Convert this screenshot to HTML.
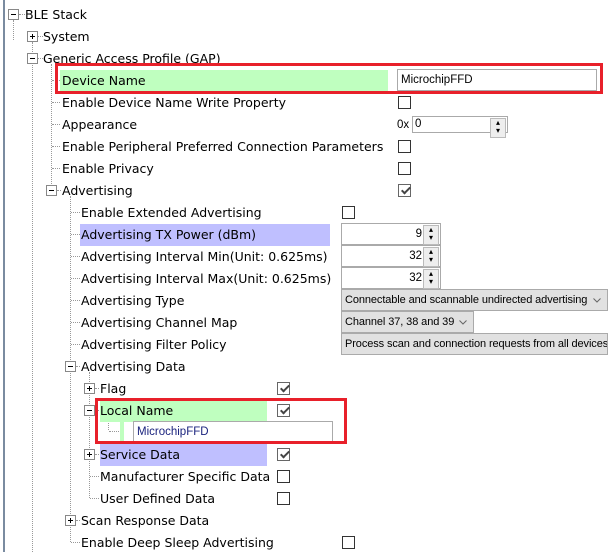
<!DOCTYPE html><html><head><style>
body{margin:0;width:608px;height:552px;background:#fff;position:relative;overflow:hidden;font-family:"DejaVu Sans","Liberation Sans",sans-serif;font-size:12.5px;color:#000}
div{position:absolute;box-sizing:border-box}
.t{height:22px;line-height:22px;white-space:nowrap;margin-top:1px}
.vl{border-left:1px dotted #999;width:1px}
.hl{border-top:1px dotted #999;height:1px}
.ex{width:11px;height:11px;border:1px solid #888;background:#fff}
.ex:before{content:"";position:absolute;left:2px;top:4px;width:5px;height:1px;background:#000}
.ex.p:after{content:"";position:absolute;left:4px;top:2px;width:1px;height:5px;background:#000}
.cb{width:13px;height:13px;border:1px solid #333;background:#fff}
.cb.c{border-color:#666}
.cb.c:after{content:"";position:absolute;width:7px;height:3px;border-left:2px solid #444;border-bottom:2px solid #444;transform:rotate(-45deg);transform-origin:0 0;top:6px;left:2px}
.tb{border:1px solid #aaa;background:#fff;font-size:11.5px;line-height:20px;padding-left:3px;font-family:"Liberation Sans",sans-serif}
.sp{border:1px solid #aaa;background:#fff;font-size:11.5px;line-height:20px;text-align:right;padding-right:18px;font-family:"Liberation Sans",sans-serif}
.sp:after{content:"▴\A▾";white-space:pre;position:absolute;right:1px;top:1px;width:14px;height:18px;background:#eee;border:1px solid #bbb;font-size:8px;line-height:8px;text-align:center}
.cm{border:1px solid #aaa;background:#e1e1e1;font-size:11px;letter-spacing:-0.1px;line-height:20px;padding-left:3px;font-family:"Liberation Sans",sans-serif;white-space:nowrap;overflow:hidden}
.cm svg{position:absolute;right:6px;top:8px}
.red{border:3px solid #e8202a}
</style></head><body>
<div style="left:3px;top:0;width:2px;height:552px;background:#7a8ba0"></div>
<div class="vl" style="left:13px;top:20px;height:20px"></div>
<div class="vl" style="left:32px;top:42px;height:510px"></div>
<div class="vl" style="left:51px;top:64px;height:126px"></div>
<div class="vl" style="left:70px;top:196px;height:346px"></div>
<div class="vl" style="left:89px;top:372px;height:126px"></div>
<div class="vl" style="left:108px;top:416px;height:14px"></div>
<div class="hl" style="left:19px;top:14px;width:6px"></div>
<div class="hl" style="left:38px;top:36px;width:5px"></div>
<div class="hl" style="left:38px;top:58px;width:5px"></div>
<div class="hl" style="left:52px;top:80px;width:8px"></div>
<div class="hl" style="left:52px;top:102px;width:8px"></div>
<div class="hl" style="left:52px;top:124px;width:8px"></div>
<div class="hl" style="left:52px;top:146px;width:8px"></div>
<div class="hl" style="left:52px;top:168px;width:8px"></div>
<div class="hl" style="left:57px;top:190px;width:4px"></div>
<div class="hl" style="left:71px;top:212px;width:9px"></div>
<div class="hl" style="left:71px;top:234px;width:9px"></div>
<div class="hl" style="left:71px;top:256px;width:9px"></div>
<div class="hl" style="left:71px;top:278px;width:9px"></div>
<div class="hl" style="left:71px;top:300px;width:9px"></div>
<div class="hl" style="left:71px;top:322px;width:9px"></div>
<div class="hl" style="left:71px;top:344px;width:9px"></div>
<div class="hl" style="left:76px;top:366px;width:4px"></div>
<div class="hl" style="left:95px;top:388px;width:4px"></div>
<div class="hl" style="left:95px;top:410px;width:4px"></div>
<div class="hl" style="left:109px;top:431px;width:10px"></div>
<div class="hl" style="left:95px;top:454px;width:4px"></div>
<div class="hl" style="left:90px;top:476px;width:9px"></div>
<div class="hl" style="left:90px;top:498px;width:9px"></div>
<div class="hl" style="left:76px;top:520px;width:4px"></div>
<div class="hl" style="left:71px;top:542px;width:9px"></div>
<div class="ex" style="left:8px;top:9px"></div>
<div class="ex p" style="left:27px;top:31px"></div>
<div class="ex" style="left:27px;top:53px"></div>
<div class="ex" style="left:46px;top:185px"></div>
<div class="ex" style="left:65px;top:361px"></div>
<div class="ex p" style="left:84px;top:383px"></div>
<div class="ex" style="left:84px;top:405px"></div>
<div class="ex p" style="left:84px;top:449px"></div>
<div class="ex p" style="left:65px;top:515px"></div>
<div style="left:60px;top:70px;width:328px;height:22px;background:#bfffbf"></div>
<div style="left:80px;top:224px;width:250px;height:22px;background:#bfbfff"></div>
<div style="left:100px;top:400px;width:167px;height:22px;background:#bfffbf"></div>
<div style="left:120px;top:422px;width:4px;height:20px;background:#bfffbf"></div>
<div style="left:100px;top:444px;width:167px;height:22px;background:#bfbfff"></div>
<div class="t" style="left:25px;top:3px">BLE Stack</div>
<div class="t" style="left:43px;top:25px">System</div>
<div class="t" style="left:43px;top:47px">Generic Access Profile (GAP)</div>
<div class="t" style="left:62px;top:69px">Device Name</div>
<div class="t" style="left:62px;top:91px">Enable Device Name Write Property</div>
<div class="t" style="left:62px;top:113px">Appearance</div>
<div class="t" style="left:62px;top:135px">Enable Peripheral Preferred Connection Parameters</div>
<div class="t" style="left:62px;top:157px">Enable Privacy</div>
<div class="t" style="left:62px;top:179px">Advertising</div>
<div class="t" style="left:81px;top:201px">Enable Extended Advertising</div>
<div class="t" style="left:81px;top:223px">Advertising TX Power (dBm)</div>
<div class="t" style="left:81px;top:245px">Advertising Interval Min(Unit: 0.625ms)</div>
<div class="t" style="left:81px;top:267px">Advertising Interval Max(Unit: 0.625ms)</div>
<div class="t" style="left:81px;top:289px">Advertising Type</div>
<div class="t" style="left:81px;top:311px">Advertising Channel Map</div>
<div class="t" style="left:81px;top:333px">Advertising Filter Policy</div>
<div class="t" style="left:81px;top:355px">Advertising Data</div>
<div class="t" style="left:100px;top:377px">Flag</div>
<div class="t" style="left:100px;top:399px">Local Name</div>
<div class="t" style="left:100px;top:443px">Service Data</div>
<div class="t" style="left:100px;top:465px">Manufacturer Specific Data</div>
<div class="t" style="left:100px;top:487px">User Defined Data</div>
<div class="t" style="left:81px;top:509px">Scan Response Data</div>
<div class="t" style="left:81px;top:531px">Enable Deep Sleep Advertising</div>
<div class="tb" style="left:397px;top:69px;width:200px;height:22px">MicrochipFFD</div>
<div class="cb" style="left:398px;top:96px"></div>
<div class="t" style="left:397px;top:113px;font-size:11.5px;font-family:'Liberation Sans',sans-serif">0x</div>
<div class="sp" style="left:412px;top:116px;width:96px;height:17px;text-align:left;padding-left:2px;line-height:15px">0</div>
<div class="cb" style="left:398px;top:140px"></div>
<div class="cb" style="left:398px;top:162px"></div>
<div class="cb c" style="left:398px;top:184px"></div>
<div class="cb" style="left:342px;top:206px"></div>
<div class="sp" style="left:341px;top:223px;width:100px;height:22px">9</div>
<div class="sp" style="left:341px;top:245px;width:100px;height:22px">32</div>
<div class="sp" style="left:341px;top:267px;width:100px;height:22px">32</div>
<div class="cm" style="left:341px;top:289px;width:267px;height:22px">Connectable and scannable undirected advertising<svg width="8" height="5"><path d="M0.5 0.5L4 4L7.5 0.5" fill="none" stroke="#666"/></svg></div>
<div class="cm" style="left:341px;top:311px;width:133px;height:22px">Channel 37, 38 and 39<svg width="8" height="5"><path d="M0.5 0.5L4 4L7.5 0.5" fill="none" stroke="#666"/></svg></div>
<div class="cm" style="left:341px;top:333px;width:267px;height:22px">Process scan and connection requests from all devices</div>
<div class="cb c" style="left:277px;top:382px"></div>
<div class="cb c" style="left:277px;top:404px"></div>
<div class="tb" style="left:133px;top:421px;width:200px;height:22px;color:#1a237e">MicrochipFFD</div>
<div class="cb c" style="left:277px;top:448px"></div>
<div class="cb" style="left:277px;top:470px"></div>
<div class="cb" style="left:277px;top:492px"></div>
<div class="cb" style="left:342px;top:536px"></div>
<div class="red" style="left:55px;top:63px;width:548px;height:31px"></div>
<div class="red" style="left:95px;top:398px;width:252px;height:46px"></div>
</body></html>
